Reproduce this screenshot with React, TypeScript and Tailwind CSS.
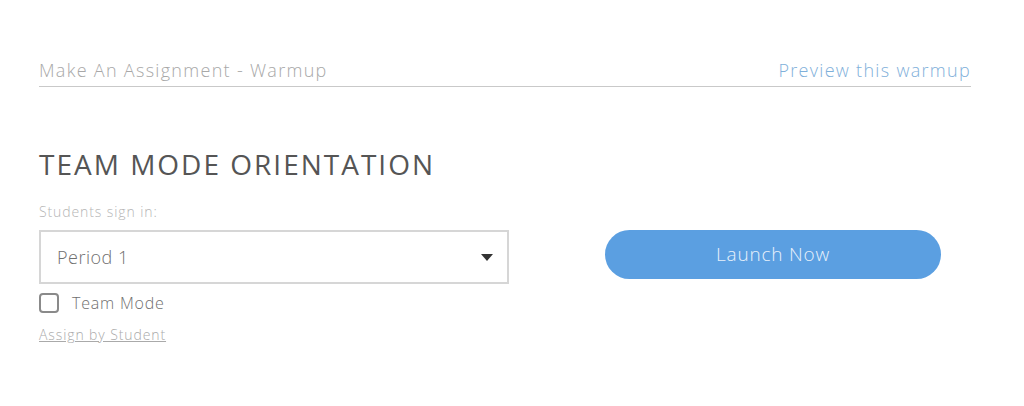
import React from "react";

export default function App() {
  return (
    <div className="w-[1024px] h-[406px] bg-white pl-[39px] pr-[53px] pt-[57px]" style={{ fontFamily: '"Open Sans", "Noto Sans", sans-serif' }}>
      <div className="flex items-end justify-between border-b border-[#c9c9c9] pb-[2px]">
        <span className="text-[18px] font-light text-[#a8a8a8] tracking-[1.3px]">Make An Assignment - Warmup</span>
        <span className="text-[18px] font-light text-[#7fb0da] tracking-[1.3px]">Preview this warmup</span>
      </div>
      <h1 className="mt-[60px] text-[28px] font-normal text-[#555] tracking-[2px] leading-[34px]">TEAM MODE ORIENTATION</h1>
      <div className="mt-[20px] text-[14px] text-[#b5b5b5] font-light tracking-[0.9px]">Students sign in:</div>
      <div className="mt-[8px] flex items-start">
        <div className="w-[470px]">
          <div className="h-[54px] border-2 border-[#d6d6d6] flex items-center justify-between pl-[16px] pr-[14px]">
            <span className="text-[18px] text-[#6f6f6f] font-light tracking-[0.5px]">Period 1</span>
            <svg width="12" height="7" viewBox="0 0 12 7"><path d="M0 0 L12 0 L6 7 Z" fill="#333" /></svg>
          </div>
          <label className="mt-[7px] flex items-center gap-[13px]">
            <span className="w-[20px] h-[20px] border-2 border-[#8a8a8a] rounded-[4px] inline-block" />
            <span className="text-[16px] text-[#6f6f6f] font-light tracking-[0.8px]">Team Mode</span>
          </label>
          <div className="mt-[9px] text-[14px] text-[#aaa] underline font-light tracking-[0.9px]">Assign by Student</div>
        </div>
        <button className="ml-[96px] w-[336px] h-[49px] rounded-full bg-[#5b9fe1] text-[19px] text-[#e8f1fb] font-light tracking-[0.8px]">Launch Now</button>
      </div>
    </div>
  );
}
